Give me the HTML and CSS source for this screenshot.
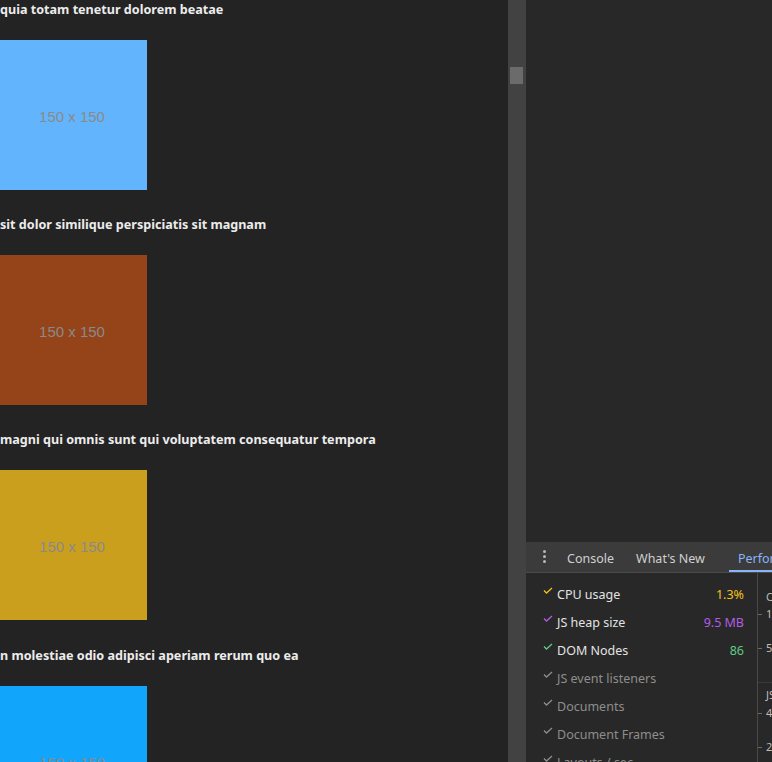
FILE: index.html
```html
<!DOCTYPE html>
<html>
<head>
<meta charset="utf-8">
<link rel="stylesheet" href="styles.css">
</head>
<body>
<div class="app">
  <main class="page">
    <section class="post">
      <h3 class="title">quia totam tenetur dolorem beatae</h3>
      <div class="thumb" style="background:#62b4fd"><span>150 x 150</span></div>
    </section>
    <section class="post">
      <h3 class="title">sit dolor similique perspiciatis sit magnam</h3>
      <div class="thumb" style="background:#95441a"><span>150 x 150</span></div>
    </section>
    <section class="post">
      <h3 class="title">magni qui omnis sunt qui voluptatem consequatur tempora</h3>
      <div class="thumb" style="background:#c99f1d"><span>150 x 150</span></div>
    </section>
    <section class="post">
      <h3 class="title">n molestiae odio adipisci aperiam rerum quo ea</h3>
      <div class="thumb" style="background:#11a6fb"><span>150 x 150</span></div>
    </section>
  </main>
  <div class="scrollbar"><div class="thumb-bar"></div></div>
  <aside class="devtools">
    <div class="devtop"></div>
    <div class="drawer">
      <div class="tabbar">
        <div class="kebab"><i></i><i></i><i></i></div>
        <div class="tab">Console</div>
        <div class="tab">What's New</div>
        <div class="tab active">Performance monitor</div>
      </div>
      <div class="monitor">
        <ul class="metrics">
          <li class="metric on cpu"><svg class="check" viewBox="0 0 10 7"><polyline points="1,3.5 3.5,6 9,1"/></svg><span class="label">CPU usage</span><span class="value">1.3%</span></li>
          <li class="metric on heap"><svg class="check" viewBox="0 0 10 7"><polyline points="1,3.5 3.5,6 9,1"/></svg><span class="label">JS heap size</span><span class="value">9.5 MB</span></li>
          <li class="metric on dom"><svg class="check" viewBox="0 0 10 7"><polyline points="1,3.5 3.5,6 9,1"/></svg><span class="label">DOM Nodes</span><span class="value">86</span></li>
          <li class="metric"><svg class="check" viewBox="0 0 10 7"><polyline points="1,3.5 3.5,6 9,1"/></svg><span class="label">JS event listeners</span></li>
          <li class="metric"><svg class="check" viewBox="0 0 10 7"><polyline points="1,3.5 3.5,6 9,1"/></svg><span class="label">Documents</span></li>
          <li class="metric"><svg class="check" viewBox="0 0 10 7"><polyline points="1,3.5 3.5,6 9,1"/></svg><span class="label">Document Frames</span></li>
          <li class="metric"><svg class="check" viewBox="0 0 10 7"><polyline points="1,3.5 3.5,6 9,1"/></svg><span class="label">Layouts / sec</span></li>
        </ul>
        <div class="chart">
          <span class="clabel" style="top:18px">C</span>
          <span class="clabel" style="top:35px">1</span>
          <span class="tick" style="top:41px"></span>
          <span class="clabel" style="top:69px">5</span>
          <span class="tick" style="top:75px"></span>
          <span class="hline" style="top:109px"></span>
          <span class="clabel" style="top:116px">JS</span>
          <span class="clabel" style="top:134px">4</span>
          <span class="tick" style="top:140px"></span>
          <span class="clabel" style="top:168px">2</span>
          <span class="tick" style="top:174px"></span>
        </div>
      </div>
    </div>
  </aside>
</div>
</body>
</html>
```

FILE: styles.css
```css
* { box-sizing: border-box; }
html, body { margin: 0; padding: 0; }
body { width: 772px; height: 762px; overflow: hidden; background: #232323; }
.app { display: flex; height: 762px; }

.page {
  width: 508px;
  flex: none;
  background: #232323;
  overflow: hidden;
  display: flex;
  flex-direction: column;
  gap: 25px;
}
.post { display: flex; flex-direction: column; gap: 22px; }
.post:nth-child(4) { margin-top: 1px; }
.title {
  margin: 0;
  height: 18px;
  line-height: 20px;
  font-family: "Noto Sans", "Open Sans", sans-serif;
  font-size: 12.6px;
  font-weight: 700;
  color: #ececec;
  white-space: nowrap;
}
.thumb {
  width: 150px;
  height: 150px;
  margin-left: -3px;
  display: flex;
  align-items: center;
  justify-content: center;
}
.thumb span {
  font-family: "Liberation Sans", Arial, sans-serif;
  font-size: 15px;
  color: #8a8a8a;
  margin-top: 2px;
}

.scrollbar {
  width: 18px;
  flex: none;
  background: #424242;
  padding: 67px 3px 0 2px;
}
.thumb-bar { width: 13px; height: 17px; background: #6b6b6b; }

.devtools {
  flex: 1;
  display: flex;
  flex-direction: column;
  background: #282828;
  font-family: "Noto Sans", "Open Sans", sans-serif;
  font-size: 12.5px;
}
.devtop { height: 542px; flex: none; background: #282828; }
.drawer { flex: 1; display: flex; flex-direction: column; }
.tabbar {
  height: 31px;
  flex: none;
  background: #3b3b3b;
  border-bottom: 1px solid #4a4a4a;
  display: flex;
  align-items: stretch;
  white-space: nowrap;
  overflow: hidden;
}
.kebab {
  width: 36px;
  flex: none;
  display: flex;
  flex-direction: column;
  align-items: center;
  justify-content: center;
  gap: 2px;
  padding-bottom: 2px;
}
.kebab i { width: 3px; height: 3px; border-radius: 50%; background: #b8b8b8; display: block; }
.tab {
  padding: 3px 5px 0;
  margin: 0 5px 0 0;
  display: flex;
  align-items: center;
  color: #d0d0d0;
}
.tab:nth-child(2) { margin-left: 0; }
.tab:nth-child(3) { margin-left: 7px; }
.tab.active {
  color: #8ab4f8;
  margin-left: 14px;
  padding-left: 9px;
  box-shadow: inset 0 -2px 0 #8ab4f8;
}

.monitor { flex: 1; display: flex; }
.metrics {
  list-style: none;
  margin: 0;
  padding: 7px 0 0 0;
  width: 232px;
  flex: none;
  border-right: 1px solid #4a4a4a;
}
.metric {
  height: 28px;
  display: flex;
  align-items: center;
  padding-left: 17px;
  padding-right: 13px;
  color: #8e8e8e;
}
.check {
  width: 10px;
  height: 7px;
  margin-right: 4px;
  margin-top: -7px;
  fill: none;
  stroke: #8e8e8e;
  stroke-width: 1.3;
}
.label { flex: 1; }
.value { text-align: right; }
.metric.on .label { color: #e3e3e3; }
.cpu .value { color: #f2c21b; }
.cpu .check { stroke: #f2c21b; }
.heap .value { color: #b35ce6; }
.heap .check { stroke: #b35ce6; }
.dom .value { color: #62c987; }
.dom .check { stroke: #62c987; }

.chart { flex: 1; position: relative; }
.clabel {
  position: absolute;
  left: 8px;
  font-size: 11px;
  line-height: 12px;
  color: #bdbdbd;
}
.tick { position: absolute; left: 0; width: 4px; height: 1px; background: #6a6a6a; }
.hline { position: absolute; left: 0; right: 0; height: 1px; background: #3a3a3a; }
```
